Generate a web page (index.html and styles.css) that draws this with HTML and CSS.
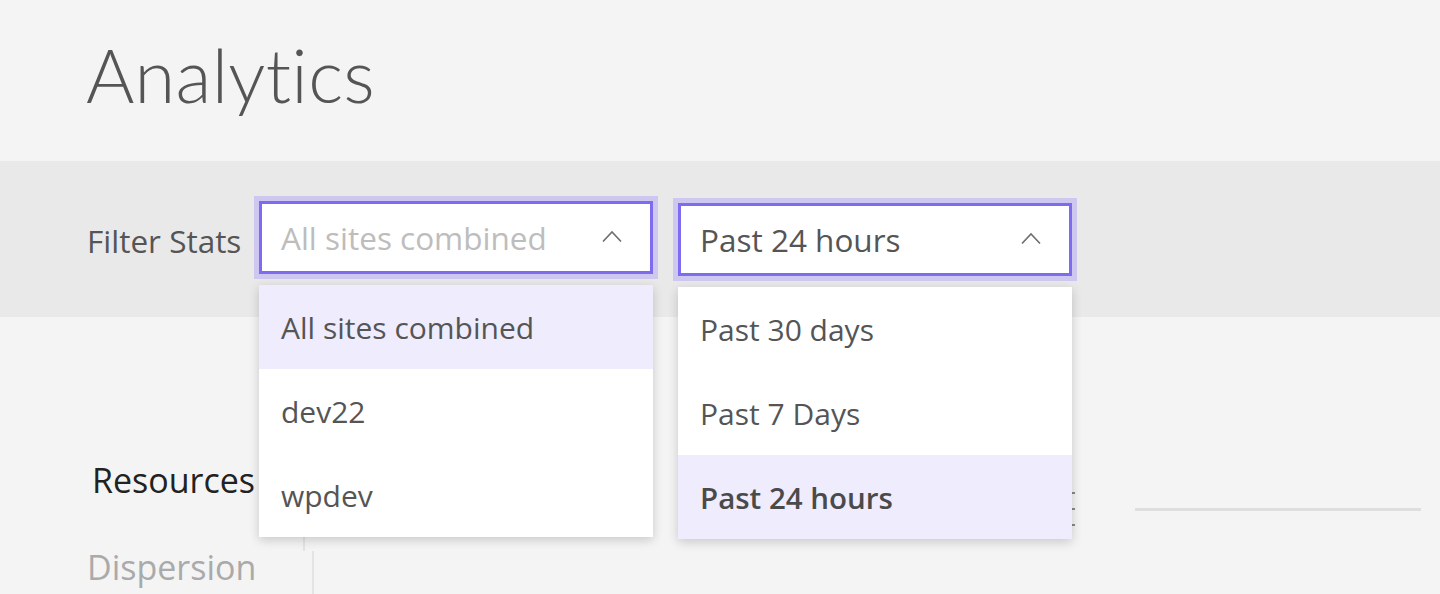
FILE: index.html
```html
<!DOCTYPE html>
<html lang="en">
<head>
<meta charset="utf-8">
<title>Analytics</title>
<link rel="stylesheet" href="styles.css">
</head>
<body>
<header class="page-header">
  <h1 class="title">Analytics</h1>
</header>
<section class="filter-bar">
  <span class="filter-label">Filter Stats</span>
  <div class="select select-site">
    <div class="select-box">
      <span class="select-value placeholder">All sites combined</span>
      <svg class="chevron" viewBox="0 0 20 12" width="20" height="12"><path d="M1 11.5 L10 2 L19 11.5" fill="none" stroke="#6f6f6f" stroke-width="1.6"/></svg>
    </div>
    <ul class="menu">
      <li class="menu-item active">All sites combined</li>
      <li class="menu-item">dev22</li>
      <li class="menu-item">wpdev</li>
    </ul>
  </div>
  <div class="select select-range">
    <div class="select-box">
      <span class="select-value">Past 24 hours</span>
      <svg class="chevron" viewBox="0 0 20 12" width="20" height="12"><path d="M1 11.5 L10 2 L19 11.5" fill="none" stroke="#6f6f6f" stroke-width="1.6"/></svg>
    </div>
    <ul class="menu">
      <li class="menu-item">Past 30 days</li>
      <li class="menu-item">Past 7 Days</li>
      <li class="menu-item active selected">Past 24 hours</li>
    </ul>
  </div>
</section>
<section class="content">
  <div class="left-col">
    <div class="tab-title">Resources</div>
    <div class="tab-sub">Dispersion</div>
  </div>
  <div class="divider-col">
    <span class="vline vline-a"></span>
    <span class="vline vline-b"></span>
  </div>
  <div class="right-col">
    <div class="ticks">
      <span class="tick"></span>
      <span class="tick"></span>
      <span class="tick"></span>
    </div>
    <span class="hline"></span>
  </div>
</section>
</body>
</html>
```
FILE: styles.css
```css
* { box-sizing: border-box; }
html, body { margin: 0; padding: 0; }
body {
  background: #f4f4f4;
  font-family: "Open Sans", "Liberation Sans", sans-serif;
  color: #555;
  width: 1440px;
  height: 594px;
  overflow: hidden;
}
.page-header {
  height: 161px;
  padding: 30px 0 0 86px;
}
.title {
  margin: 0;
  font-family: Lato, "Open Sans", sans-serif;
  font-weight: 300;
  font-size: 74px;
  line-height: 90px;
  color: #555;
  letter-spacing: 0.3px;
}
.filter-bar {
  height: 156px;
  background: #e9e9e9;
  display: flex;
  align-items: flex-start;
  padding: 40px 0 0 87px;
  position: relative;
  z-index: 2;
}
.filter-label {
  font-size: 31.5px;
  line-height: 80px;
  color: #555;
  width: 172px;
  white-space: nowrap;
}
.select {
  position: relative;
  width: 394px;
}
.select-range {
  margin-left: 25px;
  margin-top: 2px;
}
.select-box {
  height: 73px;
  background: #fff;
  border: 3px solid #7d6cf0;
  box-shadow: 0 0 0 5px #cec7ef;
  display: flex;
  align-items: center;
  justify-content: space-between;
  padding: 0 28px 0 19px;
}
.select-value {
  font-size: 31.5px;
  color: #555;
  padding-bottom: 1px;
  white-space: nowrap;
}
.select-value.placeholder { color: #bdbdbd; }
.chevron { display: block; margin-bottom: 4px; }
.menu {
  position: absolute;
  top: 84px;
  left: 0;
  width: 394px;
  margin: 0;
  padding: 0;
  list-style: none;
  background: #fff;
  box-shadow: 0 3px 10px rgba(0,0,0,0.18);
}
.menu-item {
  height: 84px;
  display: flex;
  align-items: center;
  padding: 1px 22px 0;
  font-size: 30px;
  color: #555;
  white-space: nowrap;
}
.menu-item.active { background: #efecfd; }
.menu-item.selected { font-weight: 600; color: #4a4a4a; font-size: 29.5px; }
.content {
  display: flex;
  height: 277px;
  position: relative;
  z-index: 1;
}
.left-col {
  width: 303px;
  padding: 143px 0 0 87px;
  white-space: nowrap;
}
.tab-title {
  font-size: 34px;
  color: #222;
  padding-left: 5px;
  line-height: 40px;
}
.tab-sub {
  font-size: 34px;
  color: #aaa;
  margin-top: 47px;
  line-height: 40px;
}
.divider-col {
  position: relative;
  width: 12px;
}
.vline {
  position: absolute;
  width: 2px;
  background: #e4e4e4;
}
.vline-a { left: 0; top: 219px; height: 15px; }
.vline-b { left: 9px; top: 234px; height: 60px; }
.right-col {
  flex: 1;
  display: flex;
  align-items: flex-start;
  padding: 175px 19px 0 757px;
}
.ticks {
  display: flex;
  flex-direction: column;
  width: 63px;
  padding-top: 0;
}
.tick {
  display: block;
  width: 3px;
  height: 2px;
  background: #888;
  margin-bottom: 14px;
}
.hline {
  display: block;
  flex: 1;
  height: 3px;
  margin-top: 16px;
  background: #dedede;
}
```
